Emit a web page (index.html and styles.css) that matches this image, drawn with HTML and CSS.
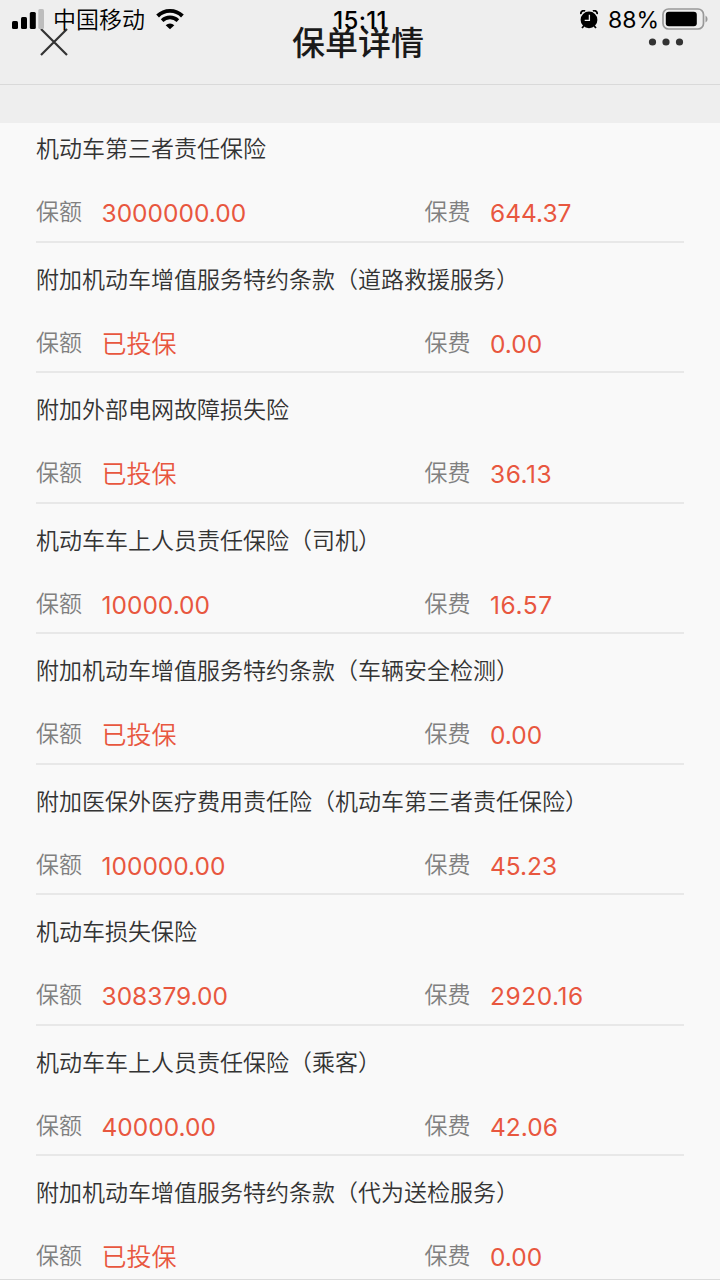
FILE: index.html
```html
<!DOCTYPE html>
<html lang="zh-CN">
<head>
<meta charset="utf-8">
<title>保单详情</title>
<link rel="stylesheet" href="styles.css">
</head>
<body>
<div class="screen">
  <header class="navbar">
    <svg class="close" width="28" height="28" viewBox="0 0 28 28"><path d="M1 1L27 27M27 1L1 27"/></svg>
    <h1 class="title">保单详情</h1>
    <svg class="more" width="36" height="8" viewBox="0 0 36 8"><circle cx="4.5" cy="4" r="3.6"/><circle cx="18" cy="4" r="3.6"/><circle cx="31.5" cy="4" r="3.6"/></svg>
    <div class="status">
      <div class="status-left">
        <svg class="signal" width="32" height="22" viewBox="0 0 32 22"><rect x="0" y="13" width="6" height="8" rx="1.5"/><rect x="9" y="9" width="6" height="12" rx="1.5"/><rect x="17.8" y="4" width="6" height="17" rx="1.5"/><rect x="26.3" y="1" width="5.7" height="20" rx="1.5" fill="#bdbdbd"/></svg>
        <span class="carrier">中国移动</span>
        <svg class="wifi" width="28" height="22" viewBox="0 0 28 22"><path d="M1.6 8A17.6 17.6 0 0 1 26.4 8" fill="none" stroke="#000" stroke-width="3.9"/><path d="M6.1 12.6A11.4 11.4 0 0 1 21.9 12.6" fill="none" stroke="#000" stroke-width="3.7"/><path d="M14 21.3L9.7 17.2A6.2 6.2 0 0 1 18.3 17.2Z"/></svg>
      </div>
      <span class="clock">15:11</span>
      <div class="status-right">
        <svg class="alarm" width="18" height="19" viewBox="0 0 18 19"><circle cx="9" cy="9.9" r="8.4"/><path d="M.9 4.2A3 3 0 0 1 5.1.9M17.1 4.2A3 3 0 0 0 12.9.9M3.8 16L2 18M14.2 16L16 18" fill="none" stroke="#000" stroke-width="1.8"/><path d="M9.4 4.8V10.3H4.7" fill="none" stroke="#eee" stroke-width="1.3"/></svg>
        <span class="percent">88%</span>
        <svg class="battery" width="46" height="22" viewBox="0 0 46 22"><rect x="1" y="1" width="40.5" height="20" rx="5.5" fill="none" stroke="#999" stroke-width="1.7"/><rect x="3.8" y="3.8" width="31" height="14.4" rx="3"/><path d="M43.5 7.5Q45.6 8.5 45.6 11T43.5 14.5Z" fill="#999"/></svg>
      </div>
    </div>
  </header>
  <div class="spacer"></div>
  <main class="list">
    <section class="item"><h2 class="name">机动车第三者责任保险</h2><div class="row"><div class="cell"><span class="label">保额</span><span class="value">3000000.00</span></div><div class="cell"><span class="label">保费</span><span class="value">644.37</span></div></div></section>
    <section class="item"><h2 class="name">附加机动车增值服务特约条款（道路救援服务）</h2><div class="row"><div class="cell"><span class="label">保额</span><span class="value insured">已投保</span></div><div class="cell"><span class="label">保费</span><span class="value">0.00</span></div></div></section>
    <section class="item"><h2 class="name">附加外部电网故障损失险</h2><div class="row"><div class="cell"><span class="label">保额</span><span class="value insured">已投保</span></div><div class="cell"><span class="label">保费</span><span class="value premium">36.13</span></div></div></section>
    <section class="item"><h2 class="name">机动车车上人员责任保险（司机）</h2><div class="row"><div class="cell"><span class="label">保额</span><span class="value">10000.00</span></div><div class="cell"><span class="label">保费</span><span class="value premium">16.57</span></div></div></section>
    <section class="item"><h2 class="name">附加机动车增值服务特约条款（车辆安全检测）</h2><div class="row"><div class="cell"><span class="label">保额</span><span class="value insured">已投保</span></div><div class="cell"><span class="label">保费</span><span class="value">0.00</span></div></div></section>
    <section class="item"><h2 class="name">附加医保外医疗费用责任险（机动车第三者责任保险）</h2><div class="row"><div class="cell"><span class="label">保额</span><span class="value">100000.00</span></div><div class="cell"><span class="label">保费</span><span class="value">45.23</span></div></div></section>
    <section class="item"><h2 class="name">机动车损失保险</h2><div class="row"><div class="cell"><span class="label">保额</span><span class="value">308379.00</span></div><div class="cell"><span class="label">保费</span><span class="value premium">2920.16</span></div></div></section>
    <section class="item"><h2 class="name">机动车车上人员责任保险（乘客）</h2><div class="row"><div class="cell"><span class="label">保额</span><span class="value">40000.00</span></div><div class="cell"><span class="label">保费</span><span class="value">42.06</span></div></div></section>
    <section class="item"><h2 class="name">附加机动车增值服务特约条款（代为送检服务）</h2><div class="row"><div class="cell"><span class="label">保额</span><span class="value insured">已投保</span></div><div class="cell"><span class="label">保费</span><span class="value">0.00</span></div></div></section>
  </main>
</div>
</body>
</html>
```
FILE: styles.css
```css
* { box-sizing: border-box; }
body {
  margin: 0;
  background: #f9f9f9;
  font-family: Inter, "Noto Sans CJK SC", sans-serif;
}
.screen {
  height: 1280px;
  overflow: hidden;
  display: flex;
  flex-direction: column;
  border-bottom: 1px solid #dcdcdc;
}
.navbar {
  position: relative;
  flex: none;
  height: 85px;
  padding: 0 36px 0 40px;
  display: grid;
  grid-template-columns: 1fr auto 1fr;
  align-items: center;
  background: #eee;
  border-bottom: 1px solid #d9d9d9;
}
.close { stroke: #333; stroke-width: 2.2; fill: none; }
.title {
  margin: 0 8px 0 0;
  padding-top: 2px;
  font-size: 33px;
  line-height: 48px;
  font-weight: 500;
  color: #1a1a1a;
}
.more { justify-self: end; fill: #333; }
.status {
  position: absolute;
  inset: 0 0 auto 0;
  height: 40px;
  padding: 0 12px;
  display: grid;
  grid-template-columns: 1fr auto 1fr;
  align-items: center;
  color: #000;
}
.status-left, .status-right { display: flex; align-items: center; }
.status-right { justify-content: flex-end; }
.signal, .wifi, .alarm, .battery { margin-bottom: 2px; }
.carrier { margin-left: 9px; font-weight: 350; font-size: 23px; line-height: 32px; }
.wifi { margin-left: 11px; }
.clock { padding-top: 1px; font-size: 24px; font-weight: 500; line-height: 32px; letter-spacing: .3px; }
.percent { margin: 0 3px 0 10px; font-size: 23px; line-height: 32px; }
.spacer { flex: none; height: 38px; background: #eee; }
.list { padding: 0 36px; }
.item {
  height: 130.5px;
  padding-top: 21px;
  border-bottom: 2px solid #e8e8e8;
}
.item:first-child { height: 119.5px; padding-top: 10px; }
.item:last-child { border-bottom: 0; }
.name {
  margin: 0;
  font-size: 23px;
  line-height: 33px;
  font-weight: 350;
  color: #333;
}
.row {
  margin-top: 31px;
  display: grid;
  grid-template-columns: 388.5px 1fr;
}
.cell { display: flex; align-items: center; height: 33px; }
.label { width: 65.5px; padding-bottom: 2px; font-size: 23px; line-height: 33px; font-weight: 350; color: #808080; }
.value { font-size: 24.5px; line-height: 33px; color: #e8573f; }
.premium { letter-spacing: .55px; }
.insured { font-size: 25px; font-weight: 350; }
```
